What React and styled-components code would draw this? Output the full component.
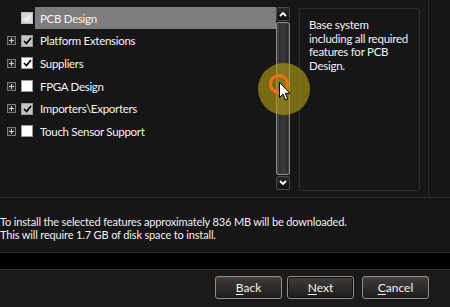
import React from "react";
import styled, { createGlobalStyle } from "styled-components";

const Global = createGlobalStyle`
  html, body { margin: 0; padding: 0; background: #161616; }
  body { width: 450px; height: 307px; overflow: hidden; font-family: Lato, "Open Sans", sans-serif; }
`;

const Page = styled.div`
  position: relative;
  width: 450px;
  height: 307px;
  display: flex;
  flex-direction: column;
  background: #161616;
  color: #f2f2f2;
  font-size: 12px;
  overflow: hidden;
`;

const TopArea = styled.div`
  height: 198px;
  display: flex;
  border-bottom: 1px solid #2e2e2e;
  box-sizing: border-box;
`;

const TreePane = styled.div`
  display: flex;
  padding-top: 7px;
  height: 183px;
`;

const Tree = styled.div`
  width: 276px;
  display: flex;
  flex-direction: column;
`;

const Row = styled.div`
  height: 22.6px;
  display: flex;
  align-items: center;
  padding-left: 7px;
`;

const Expander = styled.div`
  width: 9px;
  height: 9px;
  box-sizing: border-box;
  border: 1px solid ${p => (p.$hidden ? "transparent" : "#7a7a7a")};
  background: ${p => (p.$hidden ? "transparent" : "#2a2a2a")};
  display: flex;
  align-items: center;
  justify-content: center;
  margin-right: 5px;
  svg { display: block; }
`;

const Box = styled.div`
  width: 12px;
  height: 12px;
  box-sizing: border-box;
  border: 1px solid ${p => (p.$variant === "disabled" ? "#bdbdbd" : "#9a9a9a")};
  background: ${p =>
    p.$variant === "disabled" ? "#d8d8d8" : p.$variant === "partial" ? "#c4c4c4" : "#ffffff"};
  display: flex;
  align-items: center;
  justify-content: center;
  margin-right: 2px;
`;

const Label = styled.div`
  flex: 1;
  height: 22px;
  display: flex;
  align-items: center;
  padding-left: 5px;
  background: ${p => (p.$selected ? "#7d7d7d" : "transparent")};
  color: #f4f4f4;
  white-space: nowrap;
  font-size: 11.5px;
  letter-spacing: -0.3px;
`;

const Scrollbar = styled.div`
  width: 14px;
  height: 183px;
  display: flex;
  flex-direction: column;
`;

const ScrollBtn = styled.div`
  height: 14px;
  box-sizing: border-box;
  border: 1px solid #4a4a4a;
  border-radius: 2px;
  background: linear-gradient(#2a2a2a, #101010);
  display: flex;
  align-items: center;
  justify-content: center;
`;

const Thumb = styled.div`
  flex: 1;
  margin: 1px 0;
  box-sizing: border-box;
  border: 1px solid #8c8c8c;
  border-radius: 2px;
  background: linear-gradient(90deg, #5a5a5a 0, #5a5a5a 1px, #2c2c2c 2px, #3b3a38 50%, #262626 100%);
  box-shadow: inset 0 0 0 1px #3c3c3c;
`;

const Desc = styled.div`
  width: 121px;
  height: 183px;
  margin: 8px 0 0 9px;
  box-sizing: border-box;
  border: 1px solid #2f2f2f;
  border-radius: 2px;
  padding: 9px 2px 9px 9px;
  font-size: 11.5px;
  letter-spacing: -0.25px;
  line-height: 13.5px;
  color: #f2f2f2;
  white-space: nowrap;
`;

const VLine = styled.div`
  width: 1px;
  background: #2a2a2a;
  margin-left: 8px;
`;

const InfoArea = styled.div`
  height: 55px;
  box-sizing: border-box;
  padding: 17px 0 0 0;
  font-size: 11px;
  letter-spacing: -0.15px;
  line-height: 13px;
  color: #f0f0f0;
  border-bottom: 1px solid #2e2e2e;
  white-space: nowrap;
`;

const BlackBand = styled.div`
  height: 16px;
  background: #000;
  border-bottom: 1px solid #303030;
`;

const ButtonBar = styled.div`
  flex: 1;
  display: flex;
  justify-content: flex-end;
  align-items: flex-start;
  padding: 6px 21px 0 0;
  gap: 5px;
  background: #1a1a1a;
`;

const Button = styled.div`
  width: 67px;
  height: 23px;
  box-sizing: border-box;
  border: 1px solid #8e8e8e;
  border-radius: 3px;
  background: linear-gradient(#403d3a, #1d1c1b);
  box-shadow: ${p => (p.$default ? "inset 0 0 0 1px #111" : "inset 0 1px 0 #4a4744")};
  color: #f2f2f2;
  display: flex;
  align-items: center;
  justify-content: center;
  font-size: 12px;
  margin-left: ${p => p.$extra || 0}px;
  u { text-decoration: underline; text-underline-offset: 2px; }
`;

const Overlay = styled.div`
  position: absolute;
  left: 258px;
  top: 63px;
  width: 52px;
  height: 52px;
  border-radius: 50%;
  background: rgba(180, 160, 20, 0.62);
  pointer-events: none;
`;

const Ring = styled.div`
  position: absolute;
  left: 269px;
  top: 74px;
  width: 14px;
  height: 14px;
  border-radius: 50%;
  border: 3px solid #ff6a14;
`;

const Cursor = styled.svg`
  position: absolute;
  left: 279px;
  top: 82px;
`;

const Check = ({ color = "#000" }) => (
  <svg width="9" height="8" viewBox="0 0 9 8">
    <path d="M1 4 L3.5 6.5 L8 1" fill="none" stroke={color} strokeWidth="1.7" />
  </svg>
);

const Plus = () => (
  <svg width="7" height="7" viewBox="0 0 7 7">
    <path d="M1 3.5 H6 M3.5 1 V6" stroke="#d0d0d0" strokeWidth="1" />
  </svg>
);

const items = [
  { label: "PCB Design", exp: false, box: "disabled", checked: true, selected: true },
  { label: "Platform Extensions", exp: true, box: "partial", checked: true },
  { label: "Suppliers", exp: true, box: "white", checked: true },
  { label: "FPGA Design", exp: true, box: "white", checked: false },
  { label: "Importers\\Exporters", exp: true, box: "partial", checked: true },
  { label: "Touch Sensor Support", exp: true, box: "white", checked: false },
];

export default function App() {
  return (
    <Page>
      <Global />
      <TopArea>
        <TreePane>
          <Tree>
            {items.map(it => (
              <Row key={it.label}>
                <Expander $hidden={!it.exp}>{it.exp && <Plus />}</Expander>
                <Box $variant={it.box}>
                  {it.checked && <Check color={it.box === "disabled" ? "#f4f4f4" : "#000"} />}
                </Box>
                <Label $selected={it.selected}>{it.label}</Label>
              </Row>
            ))}
          </Tree>
          <Scrollbar>
            <ScrollBtn>
              <svg width="8" height="6" viewBox="0 0 8 6">
                <path d="M1 5 L4 2 L7 5" fill="none" stroke="#fff" strokeWidth="1.8" />
              </svg>
            </ScrollBtn>
            <Thumb />
            <ScrollBtn>
              <svg width="8" height="6" viewBox="0 0 8 6">
                <path d="M1 1 L4 4 L7 1" fill="none" stroke="#fff" strokeWidth="1.8" />
              </svg>
            </ScrollBtn>
          </Scrollbar>
        </TreePane>
        <Desc>
          Base system
          <br />
          including all required
          <br />
          features for PCB
          <br />
          Design.
        </Desc>
        <VLine />
      </TopArea>
      <InfoArea>
        To install the selected features approximately 836 MB will be downloaded.
        <br />
        This will require 1.7 GB of disk space to install.
      </InfoArea>
      <BlackBand />
      <ButtonBar>
        <Button><span><u>B</u>ack</span></Button>
        <Button $default><span><u>N</u>ext</span></Button>
        <Button $extra={3}><span><u>C</u>ancel</span></Button>
      </ButtonBar>
      <Overlay />
      <Ring />
      <Cursor width="12" height="19" viewBox="0 0 12 19">
        <path d="M0.5 0.5 V15.5 L4 12 L6.5 18 L8.7 17 L6.3 11.3 H11 Z" fill="#fff" stroke="#000" strokeWidth="1" />
      </Cursor>
    </Page>
  );
}
